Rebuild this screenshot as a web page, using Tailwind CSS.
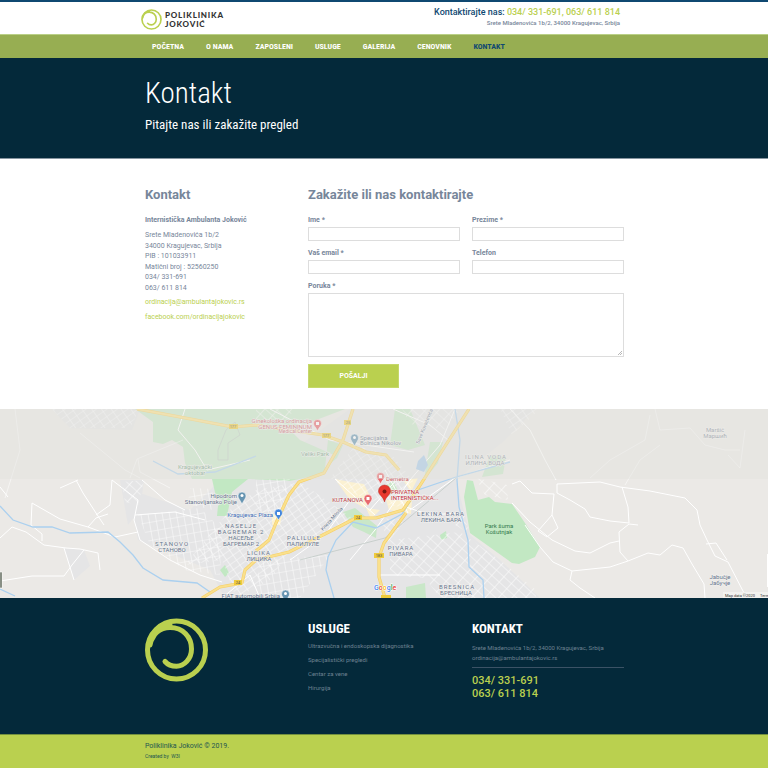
<!DOCTYPE html>
<html lang="sr-Latn">
<head>
<meta charset="utf-8">
<meta name="viewport" content="width=device-width, initial-scale=1">
<title>Kontakt - Poliklinika Joković</title>
<script src="https://cdn.jsdelivr.net/npm/@tailwindcss/browser@4"></script>
</head>
<body class="bg-white font-[Roboto,sans-serif] text-[#77869a]">
<header class="border-t-2 border-[#0f4871] bg-white">
  <div class="mx-auto flex h-8 w-full max-w-[488px] items-start justify-between pr-2 pl-px">
    <a href="#" class="flex items-center gap-[3px] pt-[7px] text-[#333]" aria-label="Poliklinika Joković">
      <svg class="size-[21px]" viewBox="0 0 64 64" fill="none" stroke="#bad04f" stroke-width="5" stroke-linecap="round"><circle cx="32" cy="32" r="29"/><path d="M5 27C7 16 15 9.500 25 9.500C38 9.500 46.500 19 46.500 31C46.500 41 39 48.300 31.500 48.300C26 48.300 23 47 20 43.500M6 23Q12 9 25 7"/></svg>
      <span class="font-[Lato,sans-serif] text-[8px] leading-[9px] font-black tracking-widest">POLIKLINIKA<br>JOKOVIĆ</span>
    </a>
    <div class="pt-[5px] text-right">
      <p class="text-[9px] leading-[10px] font-medium text-[#0f4871]">Kontaktirajte nas: <span class="text-[#bad04f]">034/ 331-691, 063/ 611 814</span></p>
      <p class="pt-[2px] text-[6px] leading-[8px] font-medium">Srete Mladenovića 1b/2, 34000 Kragujevac, Srbija</p>
    </div>
  </div>
</header>
<nav class="border-t border-[#bad087] bg-[#97ae52]">
  <div class="mx-auto flex h-[23px] w-full max-w-[480px] items-center gap-[22px] px-2 font-['Roboto_Condensed',Roboto,sans-serif] text-[8px] font-bold text-white">
    <a href="#">POČETNA</a><a href="#">O NAMA</a><a href="#">ZAPOSLENI</a><a href="#">USLUGE</a><a href="#">GALERIJA</a><a href="#">CENOVNIK</a><a href="#" class="text-[#0f4871]">KONTAKT</a>
  </div>
</nav>
<section class="border-b border-[#8795a0] bg-[#04293a] pt-[17px] pb-[25px] font-['Roboto_Condensed',Roboto,sans-serif] text-white">
  <div class="mx-auto w-full max-w-[480px] px-px">
    <h1 class="text-[29px] leading-[36px] font-light">Kontakt</h1>
    <p class="pt-[6px] text-[13px] leading-[16px]">Pitajte nas ili zakažite pregled</p>
  </div>
</section>
<main class="mx-auto grid w-full max-w-[480px] grid-cols-3 gap-x-3 pt-7 pb-[21px]">
  <section class="pl-px">
    <h2 class="text-[13px] leading-[16px] font-bold">Kontakt</h2>
    <div class="flex flex-col gap-1 pt-[12px] text-[7px] leading-[11px]">
      <p class="font-bold">Internistička Ambulanta Joković</p>
      <p class="leading-[1.5]">Srete Mladenovića 1b/2<br>34000 Kragujevac, Srbija<br>PIB : 101033911<br>Matični broj : 52560250<br>034/ 331-691<br>063/ 611 814</p>
      <a class="text-[#bad04f]" href="#">ordinacija@ambulantajokovic.rs</a>
      <a class="text-[#bad04f]" href="#">facebook.com/ordinacijajokovic</a>
    </div>
  </section>
  <section class="col-span-2">
    <h2 class="text-[13px] leading-[16px] font-bold">Zakažite ili nas kontaktirajte</h2>
    <form class="grid grid-cols-2 gap-x-3 gap-y-[7px] pt-[12px] text-[7px] leading-[11px] font-bold">
      <div><label class="block" for="ime">Ime *</label><input id="ime" class="mt-px block h-[14px] w-full border border-[#ddd] px-1 font-normal"></div>
      <div><label class="block" for="prezime">Prezime *</label><input id="prezime" class="mt-px block h-[14px] w-full border border-[#ddd] px-1 font-normal"></div>
      <div><label class="block" for="email">Vaš email *</label><input id="email" type="email" class="mt-px block h-[14px] w-full border border-[#ddd] px-1 font-normal"></div>
      <div><label class="block" for="tel">Telefon</label><input id="tel" type="tel" class="mt-px block h-[14px] w-full border border-[#ddd] px-1 font-normal"></div>
      <div class="relative col-span-2"><label class="block" for="poruka">Poruka *</label><textarea id="poruka" class="mt-px block h-16 w-full resize-none border border-[#ddd] p-1 font-normal"></textarea>
        <svg class="absolute right-[2px] bottom-[2px] size-[4px]" viewBox="0 0 4 4" stroke="#999" stroke-width=".7"><path d="M0 4 4 0M2 4 4 2"/></svg></div>
      <button type="submit" class="h-6 w-[91px] border border-[#c5d86a] bg-[#bad04f] font-bold text-white">POŠALJI</button>
    </form>
  </section>
</main>
<section class="bg-[#ebe9e6]" aria-label="Mapa">
<svg class="block h-[189px] w-full" viewBox="0 409 768 189" preserveAspectRatio="xMidYMid slice" font-family="Roboto, sans-serif">
  <defs>
    <pattern id="g1" width="8" height="6" patternUnits="userSpaceOnUse" patternTransform="rotate(-35)"><path d="M0 0H8M0 0V6" stroke="#fff" stroke-width="1.200" fill="none"/></pattern>
    <pattern id="g2" width="7" height="9" patternUnits="userSpaceOnUse" patternTransform="rotate(-10)"><path d="M0 0H7M0 0V9" stroke="#fff" stroke-width="1.200" fill="none"/></pattern>
    <pattern id="g3" width="10" height="7" patternUnits="userSpaceOnUse" patternTransform="rotate(42)"><path d="M0 0H10M0 0V7" stroke="#fff" stroke-width="1.200" fill="none"/></pattern>
  </defs>
  <rect y="409" width="768" height="189" fill="#ebe9e6"/>
  <path fill="#e5e5e6" d="M128 489 190 510 220 480 300 445 350 409H535L505 440 456 480 470 535 500 560 540 598H225L210 570 138 540ZM64 548 84 550 90 566 74 580ZM120 480H144L140 510 128 525ZM52 409H140L132 430 70 428Z"/>
  <path fill="#c9e7c8" d="M135 409 153 422V442L163 444 172 440 183 447 185 463 192 479H250L290 481 322 474 334 455 300 440 290 430 345 409ZM395 409H410L425 445 408 450 390 445ZM328 440 343 445 337 458 325 468ZM430 442H443L438 463 424 480ZM490 455 506 457 503 474 482 477ZM343 512 355 508 377 526 376 538 364 532 353 527ZM383 487 393 481 398 491 390 494ZM406 587 425 583 426 598H406Z"/>
  <path fill="#c2e8c3" d="M212 479H248L232 492 227 516H217L218 506 223 500 216 497ZM467 480 473 481 478 500 489 497 495 502 512 504 525 523 540 547 535 557 519 564 512 563 470 533 464 497ZM220 570 225 565 229 573 225 577ZM440 535 446 531 447 538 441 540Z"/>
  <path fill="#fbf1d2" d="M335 479 350 482 364 484 371 498 365 508 350 500ZM386 500 412 500 411 514 389 510ZM403 480 418 478 411 492ZM272 514 283 512 280 525 272 525ZM366 508 380 510 371 519Z"/>
  <path fill="url(#g1)" opacity=".8" d="M230 510 256 490 300 482 355 520 290 550 270 580 236 598 222 560 185 565 213 530ZM355 445 393 456 414 482 400 507 365 500 330 478ZM52 409H140L130 428 70 428ZM500 409H540L512 435Z"/>
  <path fill="url(#g2)" opacity=".8" d="M138 515 200 508 222 530 220 575 185 570 150 545ZM190 488 213 489V510L188 504ZM256 480 290 478 280 515 256 510ZM260 560 330 555 300 598H255Z"/>
  <path fill="url(#g3)" opacity=".85" d="M390 540 460 532 500 560 536 590V598H440L425 578 390 575ZM380 518 406 520 388 542ZM455 525 463 510 469 533ZM402 409H460L446 430 410 424ZM122 482 144 480 138 505 125 502ZM256 409H295L280 428 256 420ZM476 478 507 485 508 500 485 495Z"/>
  <g fill="none" stroke="#fff" stroke-linejoin="round" stroke-width="1">
    <path d="M0 538 12 527 26 532 44 545 66 548 80 549 98 553 100 570M0 581 32 576 64 576 72 565 84 550M32 503 60 519 88 527 115 537 138 532M32 503 31 525 42 534 42 541M88 527 96 518 108 514M76 480 83 493 96 513 104 525M60 488 78 480M112 480 110 505 96 515M112 480 138 500 134 520 140 540 170 560 200 575 222 582M142 480 165 500 185 510M64 548 74 580M135 515 175 512 205 520M0 487 8 497"/>
    <path d="M557 484 600 482 620 487 650 491 685 498 697 510 700 525 707 540 715 556 728 562 744 593 768 598M622 487 628 507 629 523M512 503 530 522 552 540 575 551 590 553 610 543 619 541M629 523 610 521 590 517 585 509 570 500 557 493 557 484M629 524 619 532 620 552 628 561 610 567 572 571 553 562 540 547 525 525M629 524 638 525M628 561 648 553 660 555 672 545 683 548 692 564 704 584 705 598M512 484 520 481 532 493 554 494 552 515 558 528 547 537 538 531 552 515M706 544 716 543 727 560M744 593 736 598M572 571 570 580 580 588 595 598"/>
    <path d="M455 409 440 445 410 480 375 530 350 560M393 409 430 425 448 440M335 479 375 515M398 478 370 510M385 470 408 513M403 506 430 515 458 513M510 409 530 430 545 460 556 480M185 409 178 430 195 450 207 470 250 460M410 510 455 478 510 460M270 409 330 440 414 452M350 500 325 535 290 560M222 598 250 575 260 598M380 575 440 575"/>
    <path opacity=".5" d="M15 409 20 450 5 498M80 433 125 470 140 478M137 459 130 478M137 459 183 440M138 459 140 472 170 488M655 409 660 430 690 428 705 445 725 450 740 450M660 445 640 460 625 485M590 478 610 460 645 440 650 415M745 430 740 468 728 455"/>
  </g>
  <path fill="none" stroke="#abd0ef" stroke-width="1.300" d="M0 506 13 520 33 527 52 527 70 533 108 532 120 542 133 555 143 568 163 580 197 583 210 592M0 589 15 596M455 409 460 440 457 480 459 507 468 540 469 567 483 580 484 598M334 598 326 570 328 557 336 540 353 522 376 528 402 514 418 490 456 477 510 462M153 461 178 474 215 472 256 456"/>
  <path fill="#aacbea" d="M418 461 424 455 428 465 424 472 416 469Z"/>
  <path d="M218 450 226 430 235 422 240 435 228 443V460H218ZM300 560 385 538 456 478" fill="none" stroke="#bcc5c1" stroke-width=".7"/>
  <g fill="none" stroke-linejoin="round">
    <path stroke="#f5cf67" stroke-width="3.200" d="M202 598 220 587 242 583 245 570 256 560 289 552 319 537 356 518 376 518 403 510 419 487 449 440 469 409M256 551 269 540 276 523 289 495 299 482 324 473 333 457 343 440 353 409M137 409 180 417 233 427 256 425 289 430 323 435 343 442 366 452 386 455 399 470M406 513 384 543 379 557 379 577 385 598"/>
    <path stroke="#fae08c" stroke-width="2" d="M202 598 220 587 242 583 245 570 256 560 289 552 319 537 356 518 376 518 403 510 419 487 449 440 469 409M256 551 269 540 276 523 289 495 299 482 324 473 333 457 343 440 353 409M137 409 180 417 233 427 256 425 289 430 323 435 343 442 366 452 386 455 399 470M406 513 384 543 379 557 379 577 385 598"/>
  </g>
  <g fill="#efcb3b"><rect x="229" y="424" width="9" height="5"/><rect x="322" y="433" width="9" height="5"/><rect x="344" y="420" width="7" height="5"/><rect x="354" y="515" width="8" height="5"/><rect x="374" y="553" width="10" height="5"/><rect x="234" y="580" width="8" height="5"/><rect x="381" y="595" width="10" height="3"/></g>
  <g fill="#555" font-size="4" text-anchor="middle"><text x="233" y="428">177</text><text x="326" y="437">177</text><text x="348" y="424">25</text><text x="358" y="519">24</text><text x="379" y="557">183</text><text x="238" y="584">24</text></g>
  <g stroke="#fff" stroke-width=".5">
    <path fill="#6694b1" d="M242 504C240 500 238 498 238 496A4 4 0 1 1 246 496C246 498 244 500 242 504ZM354.500 446C352.500 442 350.500 440 350.500 438A4 4 0 1 1 358.500 438C358.500 440 356.500 442 354.500 446ZM285.500 602C283.500 598 281.500 596 281.500 594A4 4 0 1 1 289.500 594C289.500 596 287.500 598 285.500 602Z"/>
    <path fill="#4386dc" d="M278.500 520C276.500 516 274.500 515 274.500 513A4 4 0 1 1 282.500 513C282.500 515 280.500 516 278.500 520Z"/>
    <path fill="#e8696d" d="M317.500 431C316 427 313.500 426 313.500 423.500A4 4 0 1 1 321.500 423.500C321.500 426 319 427 317.500 431ZM380.500 484C379 480 376.500 479 376.500 476.500A4 4 0 1 1 384.500 476.500C384.500 479 382 480 380.500 484ZM368 506C366 502 364 501 364 498.500A4 4 0 1 1 372 498.500C372 501 370 502 368 506Z"/>
  </g>
  <g fill="#fff"><circle cx="242" cy="495.500" r="1.500"/><circle cx="354.500" cy="437.500" r="1.500"/><circle cx="285.500" cy="593.500" r="1.500"/><path d="M277 512H280V515H277ZM316 422H319V425H316ZM379 475H382V478H379ZM366.500 497H369.500V500H366.500Z"/></g>
  <g font-size="6" stroke="#f3f2f0" stroke-width="1" paint-order="stroke" text-anchor="middle" fill="#65748c">
    <g fill="#6d9c7c"><text x="195" y="469">Kragujevački</text><text x="195" y="475">oktobar</text><text x="315" y="455.500">Veliki Park</text></g>
    <g fill="#347b4e" stroke="none"><text x="499" y="528">Park šuma</text><text x="499" y="534">Košutnjak</text></g>
    <g fill="#c95f68"><g text-anchor="end"><text x="312" y="423">Ginekološka ordinacija</text><text x="312" y="428.500">GENUS FEMININUM</text><text x="312" y="433" font-size="5">Medical Center</text><text x="363" y="502" fill="#b93b45">KUTANOVA</text></g><g text-anchor="start"><text x="386" y="480.500">Demetra</text></g></g>
    <g text-anchor="start" fill="#c5303a"><text x="391" y="493.500">PRIVATNA</text><text x="391" y="499.500">INTERNISTIČKA...</text></g>
    <g text-anchor="start"><text x="360" y="439.500">Specijalna</text><text x="360" y="445">Bolnica Nikolov</text></g>
    <g text-anchor="end"><text x="237" y="497.500">Hipodrom</text><text x="237" y="503.500">Stanovljansko Polje</text><text x="273" y="516.500" fill="#3d6cb8">Kragujevac Plaza</text><text x="280" y="597.500">FIAT automobili Srbija</text></g>
    <text x="172" y="546" letter-spacing="1">STANOVO</text><text x="172" y="552">СТАНОВО</text>
    <text x="241" y="528" letter-spacing="1">NASELJE</text><text x="241" y="534" letter-spacing="1">BAGREMAR 2</text><text x="241" y="540">НАСЕЉЕ</text><text x="241" y="546">БАГРЕМАР 2</text>
    <text x="259" y="555" letter-spacing="1">LICIKA</text><text x="259" y="561">ЛИЦИКА</text>
    <text x="304" y="540" letter-spacing="1">PALILULE</text><text x="303" y="546">ПАЛИЛУЛЕ</text>
    <text x="401" y="550" letter-spacing="1">PIVARA</text><text x="401" y="556">ПИВАРА</text>
    <text x="441" y="516" letter-spacing="1">LEKINA BARA</text><text x="441" y="522">ЛЕКИНА БАРА</text>
    <text x="457" y="589" letter-spacing="1">BRESNICA</text><text x="456" y="595">БРЕСНИЦА</text>
    <g fill="#858d99"><text x="486" y="459" letter-spacing="1">ILINA VODA</text><text x="485" y="465">ИЛИНА ВОДА</text><text x="715" y="432">Maršić</text><text x="715" y="438">Маршић</text></g>
    <text x="720" y="578.500">Jabučje</text><text x="720" y="584.500">Јабучје</text>
    <text transform="translate(333 520) rotate(-48)" font-size="5">Kneza Miloša</text>
    <text transform="translate(426 427) rotate(-68)" font-size="5">Save Kovačevića</text>
  </g>
  <rect y="409" width="768" height="70" fill="#e3e2de" opacity=".45"/>
  <path d="M384.500 502C383 496 378.500 495 378.500 491A6 6 0 1 1 390.500 491C390.500 495 386 496 384.500 502Z" fill="#e8382f" stroke="#b92a24" stroke-width=".5"/><circle cx="384.500" cy="491.500" r="2" fill="#761812"/>
  <text x="374" y="589.500" font-size="7" font-weight="500" stroke="#fff" stroke-width="1" paint-order="stroke"><tspan fill="#4285f4">G</tspan><tspan fill="#ea4335">o</tspan><tspan fill="#fbbc05">o</tspan><tspan fill="#4285f4">g</tspan><tspan fill="#34a853">l</tspan><tspan fill="#ea4335">e</tspan></text>
  <path d="M0 572H2V588H0Z" fill="#555e50" stroke="#fff" stroke-width=".6"/><rect x="767" y="554" width="1" height="33" fill="#fff"/>
  <rect x="723" y="592" width="45" height="6" fill="#f3f2ef"/><g font-size="4" fill="#333"><text x="725" y="596.500">Map data ©2020</text><text x="760" y="596.500">Terms</text></g>
</svg>
</section>
<footer>
  <div class="bg-[#04293a] pt-5 pb-[34px]">
    <div class="mx-auto grid w-full max-w-[480px] grid-cols-3 gap-x-3 text-[6px] text-[#6d8191]">
      <svg class="ml-px size-16" viewBox="0 0 64 64" fill="none" stroke="#bad04f" stroke-width="5" stroke-linecap="round" role="img" aria-label="Poliklinika Joković"><circle cx="31.500" cy="32" r="29"/><path d="M5 27C7 16 15 9.500 25 9.500C38 9.500 46.500 19 46.500 31C46.500 41 39 48.300 31.500 48.300C26 48.300 23 47 20 43.500M6 23Q12 9 25 7"/></svg>
      <section class="pt-[3px]">
        <h3 class="font-['Roboto_Condensed',Roboto,sans-serif] text-[13px] leading-[16px] font-bold text-white">USLUGE</h3>
        <ul class="flex flex-col gap-[6px] pt-[5px] leading-[8px] whitespace-nowrap"><li><a href="#">Ultrazvučna i endoskopska dijagnostika</a></li><li><a href="#">Specijalistički pregledi</a></li><li><a href="#">Centar za vene</a></li><li><a href="#">Hirurgija</a></li></ul>
      </section>
      <section class="pt-[3px]">
        <h3 class="font-['Roboto_Condensed',Roboto,sans-serif] text-[13px] leading-[16px] font-bold text-white">KONTAKT</h3>
        <p class="border-b border-[#3b5265] pt-[6px] pb-[4px] leading-[10px]">Srete Mladenovića 1b/2, 34000 Kragujevac, Srbija<br><a href="#">ordinacija@ambulantajokovic.rs</a></p>
        <p class="pt-[6px] text-[11px] leading-[13px] font-medium text-[#bad04f]">034/ 331-691<br>063/ 611 814</p>
      </section>
    </div>
  </div>
  <div class="border-t border-[#73903f] bg-[#bad04f] pt-[5px] pb-[8px] text-[#245650]">
    <div class="mx-auto w-full max-w-[480px] px-px"><p class="text-[7px] leading-[12px]">Poliklinika Joković © 2019.</p><p class="text-[5px] leading-[8px]">Created by &nbsp;<a href="#">W3I</a></p></div>
  </div>
</footer>
</body>
</html>
